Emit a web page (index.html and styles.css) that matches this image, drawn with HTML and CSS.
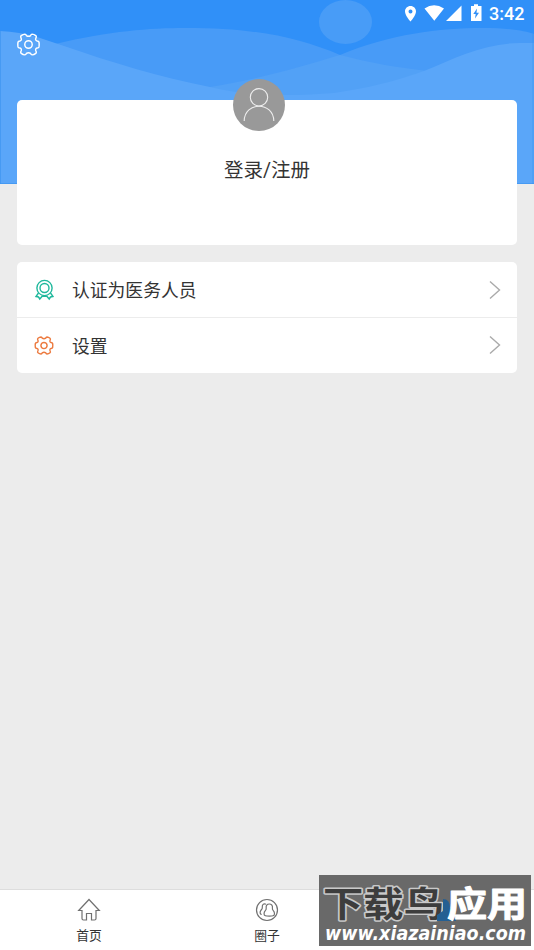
FILE: index.html
```html
<!DOCTYPE html>
<html lang="zh-CN">
<head>
<meta charset="utf-8">
<title>我的</title>
<link rel="stylesheet" href="styles.css">
</head>
<body>
<svg class="defs" width="0" height="0">
  <symbol id="gear" viewBox="-12 -12 24 24">
    <path d="M10.900 2.600Q10.600 3.600 9 3.700Q6.800 4.300 7.700 6.600Q8.600 8.400 7.600 9.200Q5.700 10.700 3.800 10.800Q2.700 10.700 2.200 9.300Q0 7.700 -2.200 9.300Q-2.700 10.700 -3.800 10.800Q-5.700 10.700 -7.600 9.200Q-8.600 8.400 -7.700 6.600Q-6.800 4.300 -9 3.700Q-10.600 3.600 -10.900 2.600Q-11.400 0 -10.900 -2.600Q-10.600 -3.600 -9 -3.700Q-6.800 -4.300 -7.700 -6.600Q-8.600 -8.400 -7.600 -9.200Q-5.700 -10.700 -3.800 -10.800Q-2.700 -10.700 -2.200 -9.300Q0 -7.700 2.200 -9.300Q2.700 -10.700 3.800 -10.800Q5.700 -10.700 7.600 -9.200Q8.600 -8.400 7.700 -6.600Q6.800 -4.300 9 -3.700Q10.600 -3.600 10.900 -2.600Q11.400 0 10.900 2.600Z"/>
    <circle r="3.900"/>
  </symbol>
</svg>
<div class="app">
  <header class="hero">
    <svg class="waves" viewBox="0 0 534 184">
      <ellipse cx="345.500" cy="22" rx="26.500" ry="22" fill="#489cf7"/>
      <path fill="#489bf7" d="M55 44C110 31 150 28 185 28C255 28 297 37 340 55C390 34 440 28 482 28C510 28 525 31 534 34V184H0V44Z"/>
      <path fill="#52a1f6" d="M210 87C260 79 300 67 340 55C370 63 400 68 428 71L350 110H210Z"/>
      <path fill="#5aa6f9" d="M0 31Q20 32 37 37L67 47C110 62 160 77 210 87C250 97 295 96 334 93C376 87 404 78 424 71C455 58 485 43 520 43H534V184H0Z"/>
      <path d="M0 183.500H534M.5 31V184M533 34V184" fill="none" stroke="#3c94ef" stroke-opacity=".65"/>
    </svg>
    <div class="status">
      <svg width="80" height="20" viewBox="404 3 80 20" fill="#fff">
        <path fill-rule="evenodd" d="M410.500 6C407.300 6 405 8.400 405 11.500C405 15.500 410.500 21.500 410.500 21.500S416 15.500 416 11.500C416 8.400 413.700 6 410.500 6ZM410.500 9.500A2 2 0 1 1 410.500 13.500A2 2 0 1 1 410.500 9.500Z"/>
        <path d="M424.500 8.500Q434 2 444 8.500L434.300 20.800ZM461.500 5.500V21H446ZM474 4.300H478V6H481.500V21H471V6H474Z"/>
        <path d="M477 8.500L473.300 14H475.700L475 18.500L479 12.800H476.500Z" fill="#318ff7"/>
      </svg>
      <span class="time">3:42</span>
    </div>
    <svg class="settings" width="23" height="23"><use href="#gear"/></svg>
  </header>
  <main class="content">
    <section class="card profile">
      <svg class="avatar" width="52" height="52" viewBox="0 0 52 52">
        <circle cx="26" cy="26" r="26" fill="#999"/>
        <g fill="none" stroke="#eee" stroke-width="1.100"><circle cx="26" cy="18.300" r="8.700"/><path d="M11.200 42C11.500 22.300 40.500 22.300 40.800 42"/></g>
      </svg>
      <div class="login">登录/注册</div>
    </section>
    <nav class="card menu">
      <a class="row">
        <svg class="icon green" width="20" height="22" viewBox="0 0 20 22">
          <circle cx="10.500" cy="9" r="7.600"/><circle cx="10.500" cy="9" r="4.500"/>
          <path d="M4.500 14L2 17.500L4.500 18L5.800 20L8.600 16.700M16.500 14L19 17.500L16.500 18L15.200 20L12.400 16.700M8.500 17.300H12.500"/>
        </svg>
        <span>认证为医务人员</span>
        <svg class="arrow" width="12" height="20" viewBox="0 0 12 20"><path d="M1 1.500L10.500 10L1 18.500"/></svg>
      </a>
      <a class="row">
        <svg class="icon orange" width="20" height="19"><use href="#gear"/></svg>
        <span>设置</span>
        <svg class="arrow" width="12" height="20" viewBox="0 0 12 20"><path d="M1 1.500L10.500 10L1 18.500"/></svg>
      </a>
    </nav>
  </main>
  <footer class="tabs">
    <a class="tab">
      <svg width="24" height="24" viewBox="0 0 24 24"><path d="M12 1.500L22.300 12.500H19V20.500Q19 22 17.500 22H14.500V15.500H9.500V22H6.500Q5 22 5 20.500V12.500H1.700Z"/></svg>
      <span>首页</span>
    </a>
    <a class="tab">
      <svg width="24" height="24" viewBox="0 0 24 24">
        <circle cx="12" cy="12" r="10.500"/>
        <path d="M14.300 6C12 6 10.800 7.800 11.200 9.800C11.400 11 11.200 11.800 10.300 12.700C8.700 14.300 8.600 17.300 10.300 17.700C12 18.300 16.600 18.300 18.200 17.700C20 17.300 19.800 14.300 18.300 12.700C17.400 11.800 17.200 11 17.400 9.800C17.800 7.800 16.600 6 14.300 6ZM11 6.200C8.500 5 7 7 7.300 9.300C7.500 10.700 6.800 11.200 6 12.200C4.800 13.800 4.600 16.300 6.700 16.500"/>
      </svg>
      <span>圈子</span>
    </a>
    <a class="tab active">
      <svg width="24" height="24" viewBox="0 0 24 24"><circle cx="12" cy="7" r="5"/><path d="M2 22C2 9 22 9 22 22Z"/></svg>
      <span>我的</span>
    </a>
  </footer>
  <aside class="watermark">
    <svg width="212" height="71" viewBox="0 0 212 71">
      <g class="brand">
        <text class="dark" x="4" y="42" textLength="121" lengthAdjust="spacingAndGlyphs">下载鸟</text>
        <path d="M124 24Q131 24 131 33Q136 36 137 46H118V40L124 36Z" fill="#245f92"/>
        <text class="light" x="128" y="42" textLength="80" lengthAdjust="spacingAndGlyphs">应用</text>
      </g>
      <text class="site" x="6" y="65" textLength="201" lengthAdjust="spacingAndGlyphs">www.xiazainiao.com</text>
    </svg>
  </aside>
</div>
</body>
</html>
```
FILE: styles.css
```css
* { box-sizing: border-box; }
body { margin: 0; font-family: Roboto, "Noto Sans CJK SC", sans-serif; color: #333; }
.defs { position: absolute; }
.app { position: relative; display: flex; flex-direction: column; height: 950px; background: #ececec; overflow: hidden; }
.hero { position: relative; height: 184px; flex: none; background: #3090f8; }
.waves { position: absolute; inset: 0; width: 100%; height: 100%; }
.status { position: relative; display: flex; justify-content: flex-end; height: 28px; padding: 3px 9px 0 0; gap: 5px; }
.time { font-size: 18px; line-height: 22px; color: #fff; width: 36px; font-weight: 500; white-space: nowrap; }
.settings { position: relative; display: block; margin: 5px 0 0 17px; fill: none; stroke: #fff; stroke-width: 1.5; }
.content { position: relative; flex: 1; margin-top: -84px; padding: 0 17px; }
.card { background: #fff; border-radius: 5px; }
.profile { position: relative; height: 145px; padding-top: 56px; text-align: center; }
.avatar { position: absolute; top: -21px; left: 216px; }
.login { font-size: 19.500px; line-height: 29px; }
.menu { margin-top: 17px; height: 111px; }
.row { display: flex; align-items: center; height: 55px; padding: 0 16px 0 17px; font-size: 17.800px; }
.row + .row { height: 56px; border-top: 1px solid #ececec; padding-bottom: 1px; }
.row span { margin-left: 18px; padding-bottom: 1px; flex: 1; }
.icon { fill: none; stroke-width: 1.4; }
.green { stroke: #1fb89c; }
.orange { stroke: #ec7a3f; stroke-width: 1.8; }
.arrow { fill: none; stroke: #aaa; stroke-width: 1.4; }
.tabs { display: flex; height: 61px; flex: none; background: #fff; border-top: 1px solid #ddd; }
.tab { flex: 1; display: flex; flex-direction: column; align-items: center; padding-top: 8px; font-size: 12.800px; line-height: 20px; }
.tab svg { fill: none; stroke: #707070; stroke-width: 1.2; }
.tab span { margin-top: 4px; }
.active { color: #3090f8; }
.active svg { fill: #3090f8; stroke: #3090f8; }
.watermark { position: absolute; left: 319px; top: 875px; width: 212px; height: 71px; background: #696969; }
.watermark svg { display: block; }
.brand { font: 700 35px "Noto Sans CJK SC", sans-serif; paint-order: stroke; stroke-linejoin: round; }
.dark { fill: #3d3d3d; stroke: #c9c9c9; stroke-width: 3px; }
.light { fill: #fff; stroke: #fff; stroke-width: 1px; }
.site { font: italic 700 20px "DejaVu Sans", sans-serif; fill: #fff; }
```
